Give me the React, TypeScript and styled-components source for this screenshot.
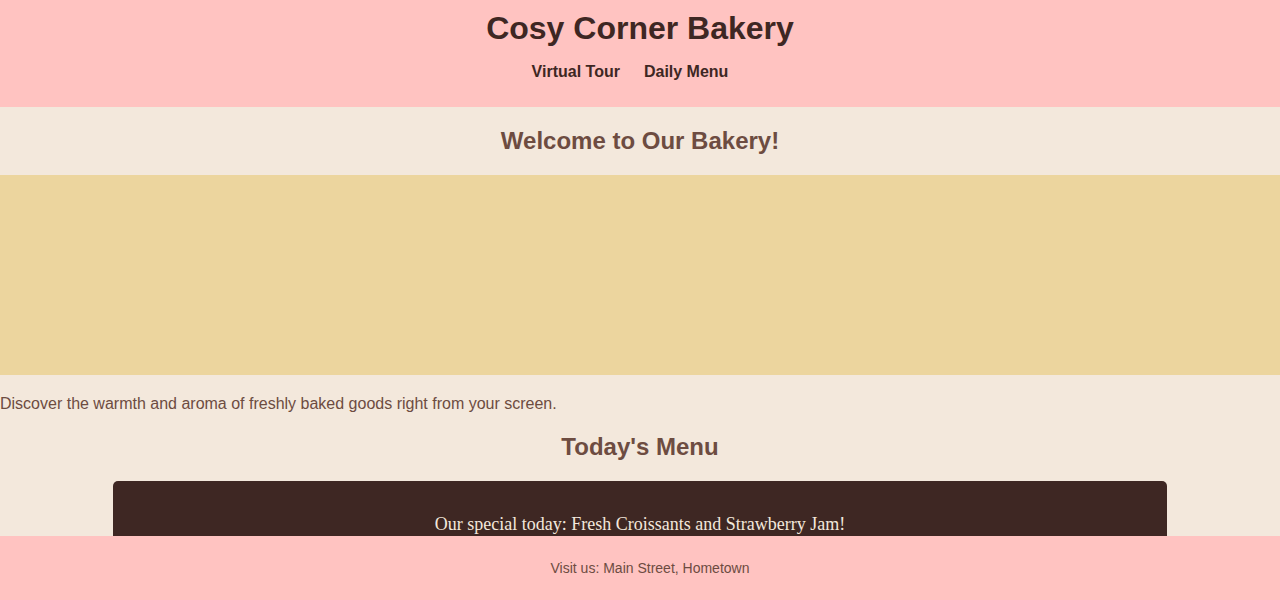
import React from 'react';
import styled, {createGlobalStyle} from 'styled-components';

const GlobalStyle = createGlobalStyle`
	body {
		margin: 0;
		background: #f3e8dc;
		font-family: "Liberation Sans", Arial, sans-serif;
		color: #6d4c41;
	}
`;

const Header = styled.header`
	background: #ffc3c1;
	padding: 10px 0;
	text-align: center;
	color: #3e2723;
`;

const Title = styled.h1`
	margin: 0;
	font-size: 32px;
	line-height: 37px;
`;

const NavList = styled.ul`
	list-style: none;
	margin: 16px 0;
	padding: 0 20px 0 0;
	display: flex;
	justify-content: center;
	gap: 24px;
`;

const NavLink = styled.a`
	color: #3e2723;
	font-weight: bold;
	font-size: 16px;
	line-height: 18px;
	text-decoration: none;
`;

const SectionTitle = styled.h2`
	margin: 20px 0;
	font-size: 24px;
	line-height: 28px;
	text-align: center;
	color: #6d4c41;
`;

const TourView = styled.div`
	height: 200px;
	background: #ecd59e;
`;

const Intro = styled.p`
	margin: 20px 0 16px;
	font-size: 16px;
	line-height: 18px;
`;

const MenuBox = styled.div`
	width: 80%;
	margin: 0 auto 80px;
	padding: 15px;
	background: #3e2723;
	border-radius: 5px;
	text-align: center;
`;

const Special = styled.p`
	margin: 18px 0;
	font-family: "Liberation Serif", "Times New Roman", serif;
	font-size: 18px;
	line-height: 21px;
	color: #f3e8dc;
`;

const Footer = styled.footer`
	position: fixed;
	left: 0;
	bottom: 0;
	width: 100%;
	padding: 10px;
	background: #ffc3c1;
	text-align: center;
`;

const FooterText = styled.p`
	margin: 14px 0;
	font-size: 14px;
	line-height: 16px;
	color: #6d4c41;
`;

export default function App() {
	return (
		<>
			<GlobalStyle/>
			<Header>
				<Title>Cosy Corner Bakery</Title>
				<nav>
					<NavList>
						<li><NavLink href="#tour">Virtual Tour</NavLink></li>
						<li><NavLink href="#menu">Daily Menu</NavLink></li>
					</NavList>
				</nav>
			</Header>
			<main>
				<section id="tour">
					<SectionTitle>Welcome to Our Bakery!</SectionTitle>
					<TourView/>
					<Intro>Discover the warmth and aroma of freshly baked goods right from your screen.</Intro>
				</section>
				<section id="menu">
					<SectionTitle>Today's Menu</SectionTitle>
					<MenuBox>
						<Special>Our special today: Fresh Croissants and Strawberry Jam!</Special>
					</MenuBox>
				</section>
			</main>
			<Footer>
				<FooterText>Visit us: Main Street, Hometown</FooterText>
			</Footer>
		</>
	);
}
